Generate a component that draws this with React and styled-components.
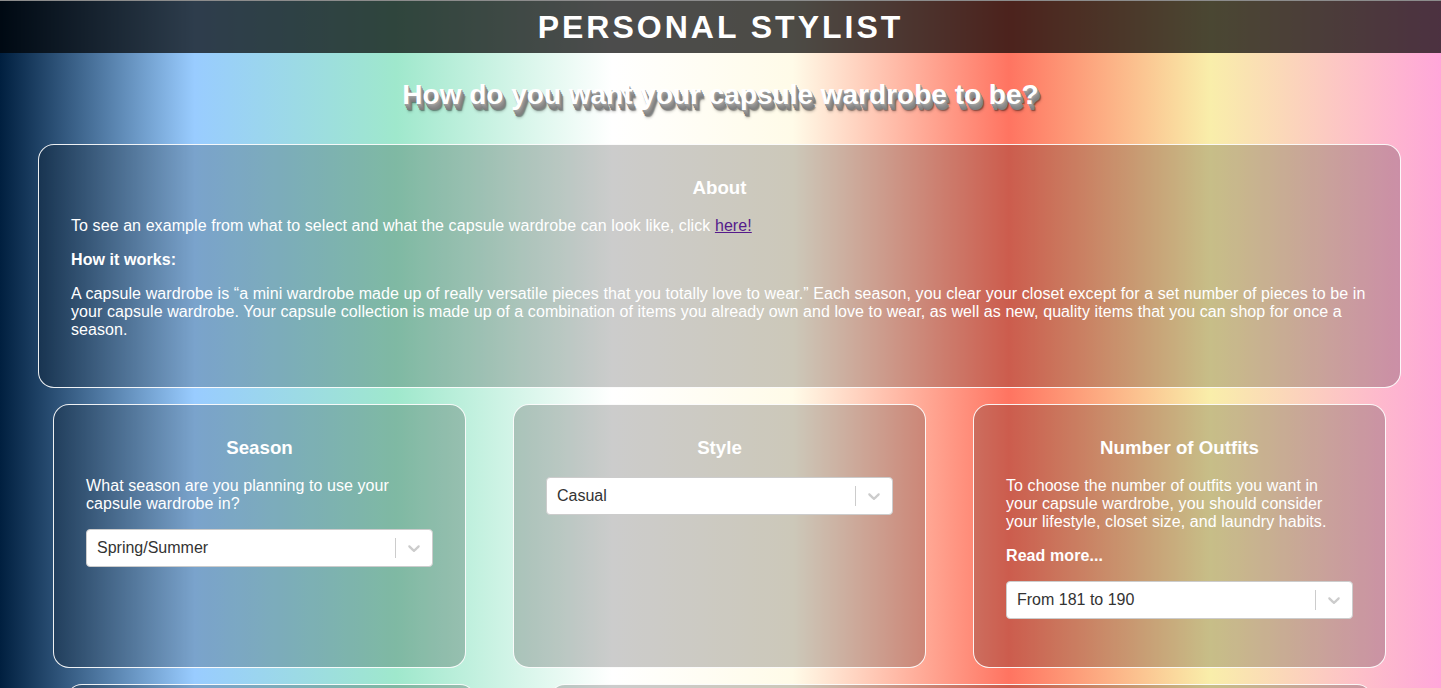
import styled, { createGlobalStyle } from "styled-components"

const GlobalStyle = createGlobalStyle`
  html, body {
    margin: 0;
    padding: 0;
  }
  body {
    min-height: 100vh;
    font-family: "Liberation Sans", Helvetica, Arial, sans-serif;
    color: #fff;
    background: linear-gradient(
      to right,
      #001f3f 0%,
      #99ccff 13.5%,
      #9fe8cc 27.5%,
      #ffffff 42.5%,
      #fffbe8 55%,
      #ff7461 70%,
      #f9eeaa 84%,
      #ffa6d9 100%
    );
  }
`

const Header = styled.header`
  height: 52px;
  display: flex;
  align-items: center;
  justify-content: center;
  border-top: 1px solid #8c8c8c;
  background: rgba(0, 0, 0, 0.7);
`

const HeaderTitle = styled.h1`
  margin: 0;
  font-size: 32px;
  font-weight: 700;
  letter-spacing: 3px;
  color: #fff;
`

const Subtitle = styled.h2`
  margin: 26px 0 33px;
  text-align: center;
  font-size: 28px;
  line-height: 32px;
  font-weight: 700;
  color: #fff;
  text-shadow:
    1px 1px 0 #a0a0a0,
    1px 2px 0 #969696,
    2px 3px 0 #8e8e8e,
    2px 4px 0 #888,
    3px 5px 0 #828282,
    3px 6px 0 #7e7e7e,
    4px 7px 1px rgba(0, 0, 0, 0.35),
    4px 8px 3px rgba(0, 0, 0, 0.2);
`

const Main = styled.main`
  padding: 0 40px 0 38px;
`

const Card = styled.section`
  background: rgba(0, 0, 0, 0.2);
  border: 1px solid rgba(255, 255, 255, 0.92);
  border-radius: 16px;
  padding: 32px;
  min-height: ${(p) => p.minH || 0}px;
`

const CardTitle = styled.h3`
  margin: 0 0 18px;
  text-align: center;
  font-size: 18.72px;
  font-weight: 700;
`

const Text = styled.p`
  margin: 0 0 16px;
  font-size: 16px;
  line-height: 18px;
  letter-spacing: 0.08px;
  font-weight: ${(p) => (p.bold ? 700 : 400)};
`

const Link = styled.a`
  color: #551a8b;
  text-decoration: underline;
`

const Row = styled.div`
  display: grid;
  grid-template-columns: ${(p) => p.cols};
  justify-content: space-between;
  padding: 0 ${(p) => p.side}px;
  margin-top: ${(p) => p.top}px;
`

const Select = styled.div`
  display: flex;
  align-items: center;
  height: 38px;
  box-sizing: border-box;
  margin-bottom: 16px;
  background: #fff;
  border: 1px solid hsl(0, 0%, 80%);
  border-radius: 4px;
`

const SelectValue = styled.div`
  flex: 1;
  padding: 2px 8px 2px 10px;
  font-size: 16px;
  color: hsl(0, 0%, 20%);
`

const Separator = styled.span`
  align-self: stretch;
  width: 1px;
  margin: 8px 0;
  background: hsl(0, 0%, 80%);
`

const Indicator = styled.div`
  display: flex;
  padding: 8px;
  color: hsl(0, 0%, 80%);
`

const Chevron = () => (
  <svg width="20" height="20" viewBox="0 0 20 20" fill="currentColor">
    <path d="M4.516 7.548c0.436-0.446 1.043-0.481 1.576 0l3.908 3.747 3.908-3.747c0.533-0.481 1.141-0.446 1.574 0 0.436 0.445 0.408 1.197 0 1.615-0.406 0.418-4.695 4.502-4.695 4.502-0.217 0.223-0.502 0.335-0.787 0.335s-0.57-0.112-0.789-0.335c0 0-4.287-4.084-4.695-4.502s-0.436-1.17 0-1.615z" />
  </svg>
)

const Dropdown = ({ value }) => (
  <Select>
    <SelectValue>{value}</SelectValue>
    <Separator />
    <Indicator>
      <Chevron />
    </Indicator>
  </Select>
)

const App = () => {
  return (
    <>
      <GlobalStyle />
      <Header>
        <HeaderTitle>PERSONAL STYLIST</HeaderTitle>
      </Header>
      <Subtitle>How do you want your capsule wardrobe to be?</Subtitle>

      <Main>
        <Card>
          <CardTitle>About</CardTitle>
          <Text>
            To see an example from what to select and what the capsule wardrobe can look like, click{" "}
            <Link href="#">here!</Link>
          </Text>
          <Text bold>How it works:</Text>
          <Text>
            A capsule wardrobe is “a mini wardrobe made up of really versatile pieces that you totally love to
            wear.” Each season, you clear your closet except for a set number of pieces to be in your capsule
            wardrobe. Your capsule collection is made up of a combination of items you already own and love to
            wear, as well as new, quality items that you can shop for once a season.
          </Text>
        </Card>

        <Row cols="repeat(3, 413px)" side={15} top={16}>
          <Card>
            <CardTitle>Season</CardTitle>
            <Text>What season are you planning to use your capsule wardrobe in?</Text>
            <Dropdown value="Spring/Summer" />
          </Card>
          <Card>
            <CardTitle>Style</CardTitle>
            <Dropdown value="Casual" />
          </Card>
          <Card>
            <CardTitle>Number of Outfits</CardTitle>
            <Text>
              To choose the number of outfits you want in your capsule wardrobe, you should consider your
              lifestyle, closet size, and laundry habits.
            </Text>
            <Text bold>Read more...</Text>
            <Dropdown value="From 181 to 190" />
          </Card>
        </Row>

        <Row cols="410px 824px" side={28} top={16}>
          <Card minH={200} />
          <Card minH={200} />
        </Row>
      </Main>
    </>
  )
}

export default App
